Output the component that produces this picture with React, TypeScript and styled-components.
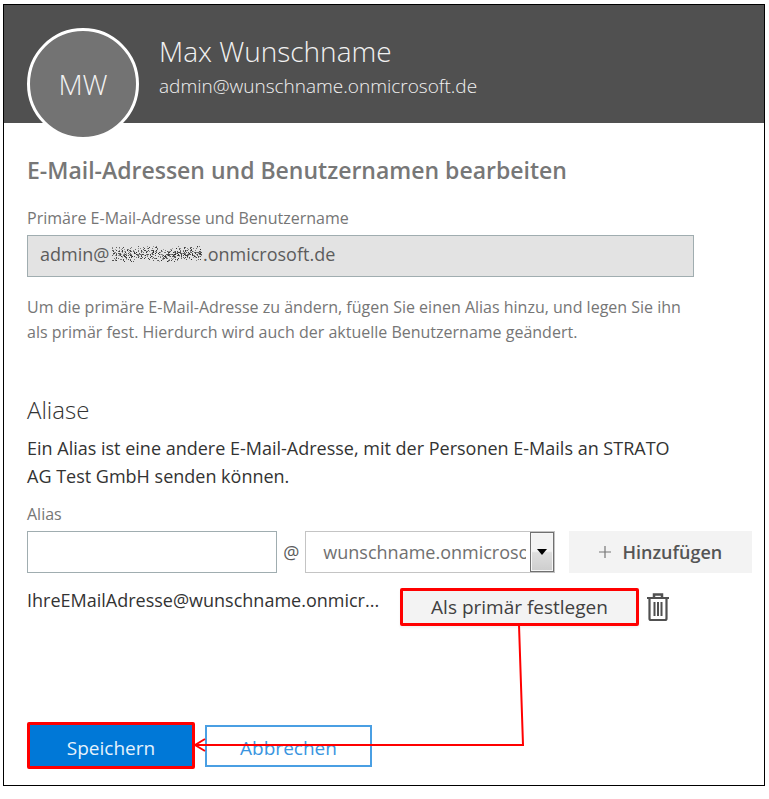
import React, { useState } from "react";
import styled, { createGlobalStyle, css } from "styled-components";

const GlobalStyle = createGlobalStyle`
  *, *::before, *::after { box-sizing: border-box; }
  body {
    margin: 0;
    background: #fff;
    font-family: "Open Sans", "Noto Sans", sans-serif;
    color: #333;
  }
  button, input, select { font: inherit; color: inherit; border-radius: 0; }
`;

const Card = styled.main`
  margin: 4px 4px 13px 3px;
  border: 1px solid #000;
  background: #fff;
`;

const Header = styled.header`
  display: flex;
  gap: 20px;
  height: 118px;
  padding: 23px 23px 0;
  background: #505050;
  color: #f2f2f2;
`;

const Avatar = styled.div`
  flex: none;
  display: flex;
  align-items: center;
  justify-content: center;
  width: 112px;
  height: 112px;
  border: 3px solid #fff;
  border-radius: 50%;
  background: #737373;
  font-size: 28px;
  font-weight: 300;
`;

const Identity = styled.div`
  min-width: 0;
  padding-top: 3px;
`;

const PersonName = styled.h1`
  margin: 0;
  font-size: 28px;
  line-height: 40px;
  font-weight: 300;
`;

const PersonMail = styled.p`
  margin: 0;
  font-size: 19px;
  line-height: 30px;
  font-weight: 300;
`;

const Body = styled.div`
  padding: 31px 12px 16px 23px;
`;

const Title = styled.h2`
  margin: 0 0 20px;
  font-size: 23px;
  line-height: 32px;
  font-weight: 600;
  color: #777;
`;

const Label = styled.label`
  display: block;
  margin-bottom: 5px;
  font-size: 16px;
  line-height: 24px;
  color: #767676;
`;

const ReadonlyField = styled.div`
  position: relative;
  width: 92%;
`;

const fieldBase = css`
  display: block;
  width: 100%;
  height: 42px;
  border: 1px solid #a0adb0;
  outline: none;
  font-size: 18px;
`;

const PrimaryInput = styled.input`
  ${fieldBase}
  padding: 0 12px 4px;
  background: #e3e3e3;
  color: #5c5c5c;
`;

const Redaction = styled.svg`
  position: absolute;
  left: 85px;
  top: 8px;
`;

const Help = styled.p`
  width: 92%;
  margin: 18px 0 49px;
  font-size: 16px;
  line-height: 25px;
  color: #767676;
`;

const SectionTitle = styled.h3`
  margin: 0 0 8px;
  font-size: 24px;
  line-height: 32px;
  font-weight: 300;
  color: #333;
`;

const Description = styled.p`
  width: 92%;
  margin: 0 0 12px;
  font-size: 18px;
  line-height: 28px;
`;

const AliasForm = styled.div`
  display: grid;
  grid-template-columns: minmax(0, 250fr) 28px minmax(0, 249fr) minmax(0, 197fr);
  align-items: center;
`;

const AliasInput = styled.input`
  ${fieldBase}
  padding: 0 12px;
  background: #fff;
`;

const At = styled.span`
  font-size: 18px;
  text-align: center;
  color: #5c5c5c;
`;

const SelectWrap = styled.div`
  position: relative;
`;

const DomainSelect = styled.select`
  ${fieldBase}
  appearance: none;
  padding: 0 28px 0 17px;
  border-color: #c4c4c4;
  background: #fff;
  color: #707070;
`;

const SelectArrow = styled.span`
  position: absolute;
  top: 1px;
  right: 1px;
  bottom: 1px;
  display: flex;
  align-items: center;
  justify-content: center;
  width: 24px;
  border: 1px solid #707070;
  background: linear-gradient(#f3f3f3 0 48%, #dedede 52%, #cdcdcd);
  box-shadow: inset 0 0 0 1px #f6f6f6;
  pointer-events: none;
`;

const AddButton = styled.button`
  display: flex;
  align-items: center;
  justify-content: center;
  gap: 10px;
  height: 42px;
  margin-left: 14px;
  padding: 0;
  border: 0;
  background: #f3f3f3;
  font-size: 18px;
  font-weight: 600;
  color: #555;
`;

const Flow = styled.div`
  position: relative;
`;

const AliasRow = styled.div`
  display: flex;
  align-items: flex-start;
  margin-top: 15px;
`;

const AliasAddress = styled.span`
  flex: 0 0 373px;
  font-size: 18px;
  line-height: 24px;
  white-space: nowrap;
`;

const marked = css`
  border: 3px solid #f00;
  border-radius: 2px;
`;

const PrimaryChoice = styled.button`
  ${marked}
  width: 239px;
  height: 38px;
  padding: 0;
  background: #f3f3f3;
  box-shadow: 0 2px 3px #0000000d;
  font-size: 19px;
  line-height: 24px;
  color: #404040;
`;

const DeleteButton = styled.button`
  display: flex;
  margin-left: 7px;
  padding: 4px 0 0;
  border: 0;
  background: none;
  color: #505050;
`;

const Footer = styled.footer`
  display: flex;
  align-items: center;
  gap: 10px;
  margin-top: 96px;
`;

const SaveButton = styled.button`
  ${marked}
  width: 168px;
  height: 47px;
  padding: 4px 0 0;
  background: #0078d7;
  font-size: 19px;
  color: #e6f2fc;
`;

const CancelButton = styled.button`
  width: 167px;
  height: 42px;
  padding: 4px 0 0;
  border: 2px solid #4a9fe3;
  background: #fff;
  font-size: 19px;
  color: #3a95df;
`;

const Connector = styled.svg`
  position: absolute;
  left: 167px;
  top: 37px;
  pointer-events: none;
`;

const HIDDEN_PART = "\u00a0".repeat(20);

function speckles() {
  let seed = 7;
  const next = () => {
    seed = (seed * 16807) % 2147483647;
    return seed / 2147483647;
  };
  return Array.from({ length: 520 }, () => {
    const x = Math.floor(next() * 90);
    const spread = (next() + next()) / 2;
    const y = Math.floor(3 + spread * 16 + Math.sin(x / 7));
    return { x, y, opacity: 0.3 + next() * 0.6 };
  });
}

const dots = speckles();

export default function App() {
  const [alias, setAlias] = useState("");
  return (
    <>
      <GlobalStyle />
      <Card>
        <Header>
          <Avatar>MW</Avatar>
          <Identity>
            <PersonName>Max Wunschname</PersonName>
            <PersonMail>admin@wunschname.onmicrosoft.de</PersonMail>
          </Identity>
        </Header>
        <Body>
          <Title>E-Mail-Adressen und Benutzernamen bearbeiten</Title>
          <Label htmlFor="primary">Primäre E-Mail-Adresse und Benutzername</Label>
          <ReadonlyField>
            <PrimaryInput id="primary" readOnly value={`admin@${HIDDEN_PART}.onmicrosoft.de`} />
            <Redaction width="92" height="22" aria-hidden="true" shapeRendering="crispEdges">
              {dots.map((d, i) => (
                <rect key={i} x={d.x} y={d.y} width="1" height="1" fill="#222" opacity={d.opacity} />
              ))}
            </Redaction>
          </ReadonlyField>
          <Help>
            Um die primäre E-Mail-Adresse zu ändern, fügen Sie einen Alias hinzu, und legen Sie ihn
            als primär fest. Hierdurch wird auch der aktuelle Benutzername geändert.
          </Help>
          <SectionTitle>Aliase</SectionTitle>
          <Description>
            Ein Alias ist eine andere E-Mail-Adresse, mit der Personen E-Mails an STRATO AG Test
            GmbH senden können.
          </Description>
          <Label htmlFor="alias">Alias</Label>
          <AliasForm>
            <AliasInput id="alias" value={alias} onChange={(e) => setAlias(e.target.value)} />
            <At>@</At>
            <SelectWrap>
              <DomainSelect aria-label="Domäne">
                <option>wunschname.onmicrosoft.de</option>
              </DomainSelect>
              <SelectArrow>
                <svg width="10" height="6" aria-hidden="true">
                  <path d="M0 0h10L5 6z" fill="#000" />
                </svg>
              </SelectArrow>
            </SelectWrap>
            <AddButton type="button">
              <svg width="14" height="14" aria-hidden="true">
                <path d="M7 1v12M1 7h12" stroke="#777" strokeWidth="1.2" />
              </svg>
              Hinzufügen
            </AddButton>
          </AliasForm>
          <Flow>
            <AliasRow>
              <AliasAddress>IhreEMailAdresse@wunschname.onmicr...</AliasAddress>
              <PrimaryChoice type="button">Als primär festlegen</PrimaryChoice>
              <DeleteButton type="button" aria-label="Alias löschen">
                <svg width="24" height="30" viewBox="0 0 24 30" fill="none" stroke="currentColor" aria-hidden="true">
                  <path d="M1 6h22" strokeWidth="2" />
                  <path d="M8 5V2.5h8V5" strokeWidth="2.5" />
                  <path d="M3.5 6v20.5q0 1.500 1.500 1.500h14q1.500 0 1.500-1.500V6" strokeWidth="2.2" />
                  <path d="M8.500 10v14M12 10v14M15.500 10v14" strokeWidth="2" />
                </svg>
              </DeleteButton>
            </AliasRow>
            <Footer>
              <SaveButton type="submit">Speichern</SaveButton>
              <CancelButton type="button">Abbrechen</CancelButton>
            </Footer>
            <Connector width="334" height="130" fill="none" stroke="#f00" strokeWidth="2" aria-hidden="true">
              <path d="M325 0L329 120H2" />
              <path d="M11 114L1 120L11 126" />
            </Connector>
          </Flow>
        </Body>
      </Card>
    </>
  );
}
